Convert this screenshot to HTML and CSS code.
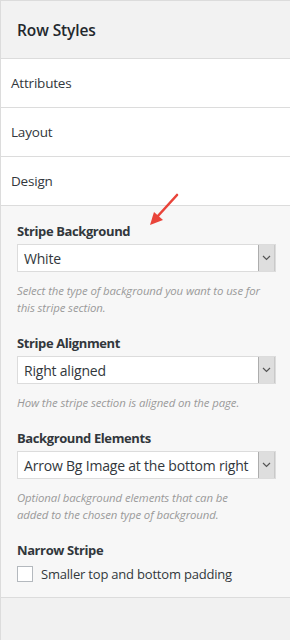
FILE: index.html
```html
<!DOCTYPE html>
<html lang="en">
<head>
  <meta charset="UTF-8" />
  <meta name="viewport" content="width=device-width, initial-scale=1.0"/>
  <title>Row Styles</title>
  <link rel="stylesheet" href="styles.css">
</head>
<body>
  <div class="sidebar">
    <div class="sidebar-header">
      <h2>Row Styles</h2>
    </div>

    <div class="tab">Attributes</div>
    <div class="tab">Layout</div>
    <div class="tab">Design</div>

    <div class="panel">
      <!-- annotation arrow pointing at the first field -->
      <svg class="pointer" width="34" height="36" viewBox="0 0 34 36">
        <line x1="30" y1="3" x2="10" y2="25" stroke="#e9443a" stroke-width="2.6" stroke-linecap="round"/>
        <polygon points="3,33 7,20 16,28" fill="#e9443a"/>
      </svg>

      <div class="field">
        <div class="field-label">Stripe Background</div>
        <div class="select">
          <span class="select-value">White</span>
          <span class="select-btn">
            <svg width="9" height="6" viewBox="0 0 9 6"><polyline points="1,1 4.5,4.5 8,1" fill="none" stroke="#555" stroke-width="1.2"/></svg>
          </span>
        </div>
        <p class="help">Select the type of background you want to use for this stripe section.</p>
      </div>

      <div class="field">
        <div class="field-label">Stripe Alignment</div>
        <div class="select">
          <span class="select-value">Right aligned</span>
          <span class="select-btn">
            <svg width="9" height="6" viewBox="0 0 9 6"><polyline points="1,1 4.5,4.5 8,1" fill="none" stroke="#555" stroke-width="1.2"/></svg>
          </span>
        </div>
        <p class="help">How the stripe section is aligned on the page.</p>
      </div>

      <div class="field">
        <div class="field-label">Background Elements</div>
        <div class="select">
          <span class="select-value">Arrow Bg Image at the bottom right</span>
          <span class="select-btn">
            <svg width="9" height="6" viewBox="0 0 9 6"><polyline points="1,1 4.5,4.5 8,1" fill="none" stroke="#555" stroke-width="1.2"/></svg>
          </span>
        </div>
        <p class="help">Optional background elements that can be<br>added to the chosen type of background.</p>
      </div>

      <div class="field last">
        <div class="field-label">Narrow Stripe</div>
        <label class="check">
          <span class="check-box"></span>
          <span>Smaller top and bottom padding</span>
        </label>
      </div>
    </div>
  </div>
</body>
</html>
```

FILE: styles.css
```css
html, body {
  margin: 0;
  padding: 0;
  height: 100%;
}

body {
  font-family: 'Open Sans', 'Noto Sans', sans-serif;
  color: #32373c;
  background: #f1f1f1;
}

.sidebar {
  min-height: 100%;
  box-sizing: border-box;
  border-left: 1px solid #dcdcdc;
  border-top: 1px solid #dcdcdc;
  background: #f1f1f1;
}

.sidebar-header {
  height: 57px;
  display: flex;
  align-items: center;
  padding-left: 16px;
  border-bottom: 1px solid #dcdcdc;
  background: #f2f2f2;
}

.sidebar-header h2 {
  margin: 0;
  font-size: 15.5px;
  font-weight: 600;
  color: #23282d;
  letter-spacing: -0.1px;
}

.tab {
  height: 48px;
  display: flex;
  align-items: center;
  padding-left: 10px;
  font-size: 13.5px;
  color: #32373c;
  background: #fff;
  border-bottom: 1px solid #dcdcdc;
  letter-spacing: -0.2px;
}

.panel {
  position: relative;
  background: #f7f7f7;
  padding: 16px 14px 14px 16px;
  border-bottom: 1px solid #dcdcdc;
}

.pointer {
  position: absolute;
  left: 146px;
  top: -14px;
}

.field {
  margin-bottom: 18px;
}

.field.last {
  margin-bottom: 0;
}

.field-label {
  font-size: 13px;
  font-weight: 700;
  line-height: 18px;
  color: #32373c;
  letter-spacing: -0.4px;
}

.select {
  display: flex;
  height: 28px;
  box-sizing: border-box;
  margin-top: 4px;
  background: #fff;
  border: 1px solid #dcdcdc;
}

.select-value {
  flex: 1;
  display: flex;
  align-items: center;
  padding-left: 6px;
  font-size: 14px;
  color: #32373c;
  white-space: nowrap;
  overflow: hidden;
  letter-spacing: -0.2px;
}

.select-btn {
  width: 15px;
  display: flex;
  align-items: center;
  justify-content: center;
  background: #dedede;
  border-left: 1px solid #adadad;
  border-right: 1px solid #c9c9c9;
}

.help {
  margin: 10px 0 0;
  font-size: 11.4px;
  font-style: italic;
  line-height: 17px;
  color: #9a9a9a;
  letter-spacing: -0.1px;
}

.check {
  display: flex;
  align-items: center;
  margin-top: 6px;
  font-size: 13px;
  color: #32373c;
  letter-spacing: -0.2px;
}

.check-box {
  width: 14px;
  height: 14px;
  margin-right: 8px;
  background: #fff;
  border: 1px solid #b4b9be;
}
```
